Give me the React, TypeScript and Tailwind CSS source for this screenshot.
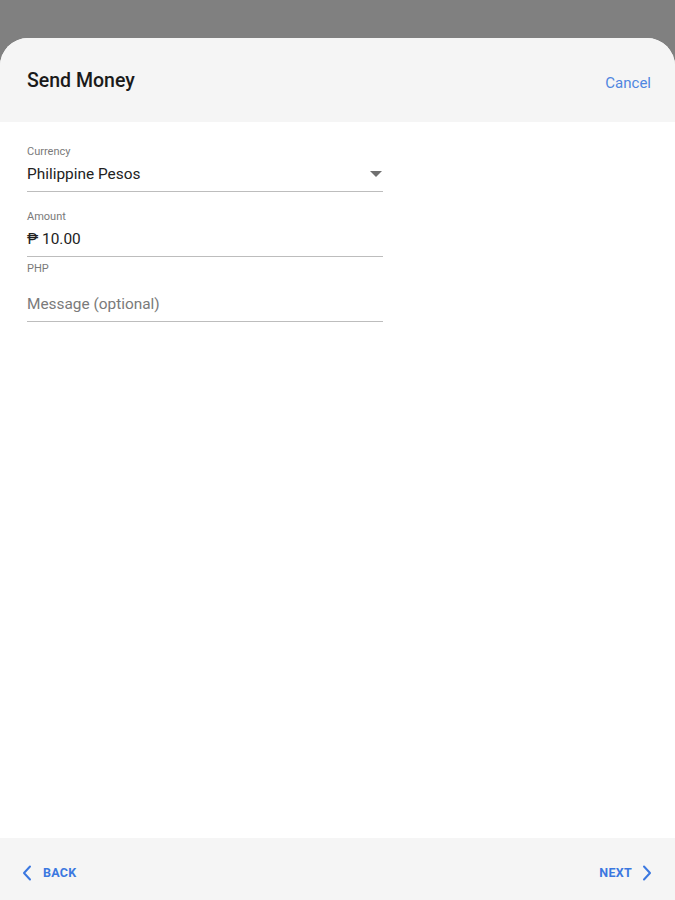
import React from "react";

export default function App() {
  return (
    <div
      className="flex min-h-screen flex-col bg-[#808080]"
      style={{ fontFamily: "Roboto, 'Noto Sans', Arial, sans-serif" }}
    >
      <div className="h-[38px] shrink-0" />
      <div className="flex flex-1 flex-col overflow-hidden rounded-t-[28px] bg-white">
        <div className="flex h-[84px] shrink-0 items-start justify-between bg-[#f5f5f5] pl-[27px] pr-[24px] pt-[31px]">
          <div className="text-[19.5px] font-medium leading-[24px] text-[#1a1a1a]">Send Money</div>
          <button className="mt-[4px] text-[15px] leading-[20px] text-[#4f86e0]">Cancel</button>
        </div>

        <div className="flex-1 pl-[27px] pt-[23px]">
          <div className="w-[356px]">
            <div className="h-[14px] text-[11px] leading-[14px] text-[#7a7a7a]">Currency</div>
            <div className="flex h-[33px] items-start justify-between border-b border-[#bdbdbd]">
              <span className="text-[15.4px] leading-[30px] text-[#222]">Philippine Pesos</span>
              <svg width="12" height="6" viewBox="0 0 12 6" className="mr-[1px] mt-[12px]">
                <path d="M0 0 L12 0 L6 6 Z" fill="#707070" />
              </svg>
            </div>

            <div className="mt-[18px] h-[14px] text-[11px] leading-[14px] text-[#7a7a7a]">Amount</div>
            <div className="flex h-[33px] items-start border-b border-[#bdbdbd]">
              <span className="text-[15.4px] leading-[30px] text-[#222]">₱ 10.00</span>
            </div>
            <div className="mt-[5px] h-[14px] text-[11px] leading-[14px] text-[#7a7a7a]">PHP</div>

            <div className="mt-[13px] flex h-[33px] items-start border-b border-[#bdbdbd]">
              <span className="text-[15.4px] leading-[30px] text-[#7a7a7a]">Message (optional)</span>
            </div>
          </div>
        </div>

        <div className="flex h-[62px] shrink-0 items-start justify-between bg-[#f5f5f5] pl-[22px] pr-[23px] pt-[25px]">
          <button className="flex h-[20px] items-center text-[#3b78e0]">
            <svg width="10" height="16" viewBox="0 0 10 16">
              <path d="M8 1.5 L2 8 L8 14.5" fill="none" stroke="#3b78e0" strokeWidth="2" strokeLinecap="round" strokeLinejoin="round" />
            </svg>
            <span className="ml-[11px] text-[12.5px] font-bold tracking-[0.3px]">BACK</span>
          </button>
          <button className="flex h-[20px] items-center text-[#3b78e0]">
            <span className="mr-[10px] text-[12.5px] font-bold tracking-[0.3px]">NEXT</span>
            <svg width="10" height="16" viewBox="0 0 10 16">
              <path d="M2 1.5 L8 8 L2 14.5" fill="none" stroke="#3b78e0" strokeWidth="2" strokeLinecap="round" strokeLinejoin="round" />
            </svg>
          </button>
        </div>
      </div>
    </div>
  );
}
